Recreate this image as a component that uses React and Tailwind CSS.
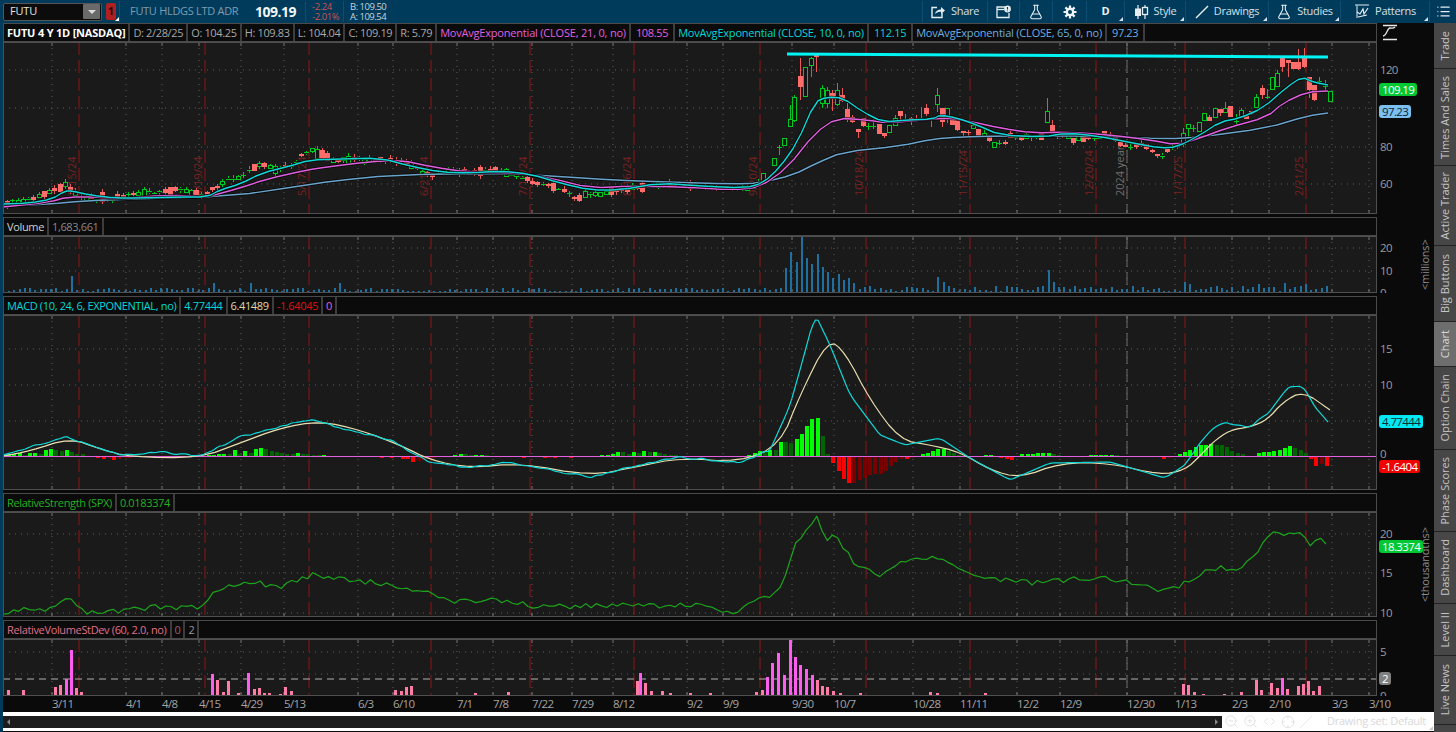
import React from "react";
import { FlaskConical, List, ZoomIn, ZoomOut, Crosshair, Slash, ChevronsLeftRight } from "lucide-react";

const rnd = (seed) => () => {
  seed |= 0; seed = (seed + 0x6d2b79f5) | 0;
  let t = Math.imul(seed ^ (seed >>> 15), 1 | seed);
  t = (t + Math.imul(t ^ (t >>> 7), 61 | t)) ^ t;
  return ((t ^ (t >>> 14)) >>> 0) / 4294967296;
};
const interp = (pts, x) => {
  if (x <= pts[0][0]) return pts[0][1];
  for (let i = 1; i < pts.length; i++) {
    if (x <= pts[i][0]) {
      const [a, b] = pts[i - 1], [c, d] = pts[i];
      return b + ((x - a) / (c - a)) * (d - b);
    }
  }
  return pts[pts.length - 1][1];
};
const toPts = (p) => p.map((q) => q.join(",")).join(" ");
const chaikin = (p, n = 2) => {
  let cur = p;
  for (let k = 0; k < n; k++) {
    const out = [cur[0]];
    for (let i = 0; i < cur.length - 1; i++) {
      const [a, b] = cur[i], [c, d] = cur[i + 1];
      out.push([a * 0.75 + c * 0.25, b * 0.75 + d * 0.25], [a * 0.25 + c * 0.75, b * 0.25 + d * 0.75]);
    }
    out.push(cur[cur.length - 1]);
    cur = out;
  }
  return cur;
};
const wobble = (p, amp, seed, xMax = 1400) => {
  const r = rnd(seed), out = [];
  for (let x = p[0][0]; x <= p[p.length - 1][0]; x += 5.25) {
    out.push([x, interp(p, x) + (x < xMax ? (r() - 0.5) * amp : 0)]);
  }
  out.push(p[p.length - 1]);
  return out;
};

const GRID_X = [52,126,162,199,241,284,358,393,457,493,532,572,613,687,723,792,834,913,960,1017,1060,1127,1175,1232,1269,1332,1369];
const DATE_LABELS = [["3/11",52],["4/1",126],["4/8",162],["4/15",199],["4/29",241],["5/13",284],["6/3",358],["6/10",393],["7/1",457],["7/8",493],["7/22",532],["7/29",572],["8/12",613],["9/2",687],["9/9",723],["9/30",792],["10/7",834],["10/28",913],["11/11",960],["12/2",1017],["12/9",1060],["12/30",1127],["1/13",1175],["2/3",1232],["2/10",1269],["3/3",1332],["3/10",1369]];
const RED = [[79,"3/15/24"],[205,"4/19/24"],[309,"5/17/24"],[431,"6/21/24"],[530,"7/19/24"],[634,"8/16/24"],[760,"9/20/24"],[866,"10/18/24"],[970,"11/15/24"],[1096,"12/20/24"],[1185,"1/17/25"],[1306,"2/21/25"]];

const CENTER = [[8,203],[30,198],[50,193],[65,183],[72,190],[80,197],[110,199],[130,194],[165,192],[180,190],[205,196],[213,188],[225,180],[240,176],[250,170],[262,163],[275,168],[290,166],[300,157],[310,150],[320,155],[335,160],[350,158],[380,160],[400,161],[410,165],[420,171],[430,175],[445,172],[470,172],[495,170],[515,172],[520,178],[540,184],[565,190],[575,198],[590,194],[610,192],[650,185],[680,185],[700,186],[720,186],[740,190],[750,188],[757,182],[765,176]];

const Z7 = [[222,355,375,355,375,"g"],[238,320,324,315,345,"g"],[253,295,315,295,315,"g"],[269,238,260,195,262,"g"],[283,172,240,165,245,"g"],[300,108,142,55,180,"r"],[316,82,170,82,170,"g"],[332,55,77,50,112,"g"],[347,45,48,45,95,"r"],[365,145,190,135,205,"g"],[380,150,188,140,205,"g"],[396,158,178,150,212,"r"],[410,150,193,130,198,"g"],[427,165,183,145,185,"r"],[441,207,240,190,245,"r"],[457,230,245,225,248,"r"],[473,267,275,267,295,"r"],[489,233,257,233,260,"r"],[505,258,262,250,270,"g"],[520,258,262,238,268,"g"],[537,252,282,252,282,"r"],[552,278,287,278,293,"r"],[568,256,278,256,278,"g"],[584,235,255,225,258,"g"],[600,213,228,213,240,"r"],[615,238,242,222,245,"g"],[632,235,241,230,255,"r"],[647,238,241,225,245,"r"],[662,236,240,200,240,"g"],[678,205,222,193,228,"r"],[694,237,240,232,262,"g"],[710,165,192,145,215,"g"],[725,205,245,205,262,"r"],[741,205,228,205,250,"g"],[756,235,255,228,255,"r"],[772,240,270,235,272,"r"],[788,273,280,273,290,"r"],[804,275,278,270,290,"r"],[819,255,265,250,268,"g"],[835,268,290,268,290,"r"],[851,278,286,268,288,"g"],[867,288,303,288,305,"r"],[882,305,320,305,322,"g"],[897,308,312,300,316,"g"]].map((c) => [700 + c[0] / 3, ...c.slice(1, 5).map((y) => 40 + y / 3), c[5]]);
const Z11 = [[14,305,312,300,316,"r"],[30,278,295,270,295,"r"],[46,290,294,285,300,"g"],[62,285,300,285,302,"r"],[77,282,295,278,295,"g"],[93,288,295,288,302,"r"],[108,290,294,285,298,"g"],[124,278,300,278,300,"r"],[140,213,247,173,248,"g"],[155,255,275,240,275,"r"],[171,275,288,275,298,"r"],[186,283,288,280,295,"r"],[203,283,295,283,295,"g"],[219,295,308,295,315,"r"],[235,283,302,283,302,"g"],[250,280,305,280,305,"r"],[265,288,298,288,300,"r"],[281,294,298,288,303,"g"],[297,285,295,285,295,"g"],[313,272,283,272,285,"r"],[329,283,287,275,295,"r"],[344,290,303,290,305,"r"],[360,307,318,307,320,"r"],[375,314,320,310,322,"r"],[391,320,324,308,330,"g"],[407,313,320,313,328,"r"],[423,308,318,295,320,"r"],[439,311,327,311,330,"r"],[455,330,336,328,340,"r"],[470,342,348,342,355,"r"],[486,346,350,340,357,"g"],[502,327,336,327,338,"r"],[517,318,322,312,330,"g"],[532,318,322,312,328,"g"],[548,278,310,265,320,"g"],[564,253,265,253,290,"g"],[580,263,267,255,275,"g"],[596,247,275,247,275,"g"],[612,220,240,220,240,"g"],[627,232,242,225,242,"r"],[644,205,233,205,235,"g"],[660,207,220,207,228,"r"],[675,203,215,185,215,"g"],[690,198,230,198,232,"r"],[707,243,247,222,255,"g"],[723,210,230,203,230,"g"],[738,228,238,225,238,"r"],[754,212,222,212,224,"r"],[769,172,203,162,203,"g"],[785,143,165,135,178,"r"],[801,170,174,148,178,"g"],[816,112,148,112,148,"g"],[832,100,140,90,140,"g"]].map((c) => [1000 + c[0] / 3, ...c.slice(1, 5).map((y) => 40 + y / 3), c[5]]);
const Z3 = [[247,85,110,85,125,"r"],[263,90,100,90,140,"r"],[279,95,117,95,118,"r"],[295,97,118,58,120,"r"],[312,85,112,55,113,"r"],[327,140,180,140,205,"r"],[343,165,210,165,212,"r"],[358,153,157,140,165,"g"],[374,168,172,150,185,"g"],[390,182,212,182,212,"g"]].map((c) => [1200 + c[0] / 3, ...c.slice(1, 5).map((y) => 30 + y / 3), c[5]]);

const bgCandles = (() => {
  const r = rnd(77), out = [];
  for (let x = 763; x > 6; x -= 5.25) {
    const c = interp(CENTER, x) + (r() - 0.5) * 3;
    const big = r() < 0.15;
    const h = big ? 5 + r() * 5 : 1.5 + r() * 2.5;
    const g = r() < 0.5;
    const w1 = c - h / 2 - r() * 3;
    const w2 = c + h / 2 + r() * 3;
    out.push([x, c - h / 2, c + h / 2, w1, w2, g ? "g" : "r"]);
  }
  out.push([773.5, 158, 165, 158, 165, "g"]);
  return out;
})();
const CANDLES = [...bgCandles, ...Z7, ...Z11, ...Z3];

const CYAN = chaikin([[3,204],[30,203],[52,199],[65,191],[72,191],[90,195],[115,198],[140,198],[180,197],[207,197],[220,190],[240,184],[262,173],[290,166],[310,160],[340,159],[380,158],[410,166],[440,172],[470,173],[500,171],[530,174],[560,183],[590,190],[620,190],[660,183],[700,186],[745,188],[763,183],[780,167],[797,143],[815,102],[827,97],[843,98],[863,112],[883,122],[907,120],[933,119],[940,115],[957,118],[977,125],[1000,135],[1043,137],[1067,133],[1097,136],[1133,143],[1160,148],[1177,147],[1200,135],[1220,122],[1240,118],[1263,108],[1287,87],[1302,77],[1313,82],[1328,85]], 1);
const PINK = chaikin([[3,207],[50,202],[67,197],[100,197],[117,199],[167,195],[207,197],[240,188],[267,179],[307,170],[327,167],[367,162],[400,160],[433,167],[467,172],[517,173],[550,178],[590,188],[633,186],[683,187],[733,190],[760,187],[787,168],[815,133],[837,118],[867,120],[887,123],[933,119],[950,118],[973,122],[1000,128],[1033,133],[1067,132],[1110,135],[1150,140],[1177,145],[1200,138],[1227,128],[1267,117],[1283,103],[1307,92],[1328,91]], 1);
const BLUE = chaikin([[3,206],[50,204],[83,201],[133,199],[233,196],[300,186],[333,181],[393,175],[500,173],[567,177],[613,180],[667,182],[733,184],[760,183],[793,175],[817,163],[843,152],[900,146],[933,139],[960,137],[1000,136],[1100,136],[1167,139],[1200,137],[1267,128],[1307,116],[1328,113]], 1);
const M_CYAN_RAW = [[3,455],[30,447],[50,442],[65,436],[85,444],[120,455],[160,452],[200,456],[225,444],[240,437],[280,427],[310,419],[340,428],[390,440],[430,462],[470,468],[510,462],[550,470],[590,477],[640,465],[680,457],[740,463],[770,450],[790,405],[800,370],[813,322],[816,316],[830,345],[850,395],[880,435],[905,445],[940,438],[970,458],[1010,480],[1050,463],[1110,462],[1165,478],[1185,465],[1200,443],[1213,428],[1225,422],[1233,425],[1240,425],[1250,428],[1260,418],[1267,415],[1288,387],[1303,386],[1315,407],[1328,422]];
const M_YEL_RAW = [[3,456],[30,451],[70,438],[100,449],[130,457],[200,458],[240,443],[280,428],[320,421],[360,430],[400,445],[430,460],[470,468],[520,463],[590,476],[640,466],[680,458],[740,462],[780,445],[800,395],[828,339],[845,352],[870,400],[900,440],[930,445],[960,452],[990,470],[1020,478],[1060,463],[1110,463],[1160,475],[1185,470],[1200,456],[1213,442],[1230,430],[1250,427],[1267,420],[1283,402],[1303,391],[1330,410]];
const M_CYAN = chaikin(wobble(M_CYAN_RAW, 2.2, 11, 790), 1);
const M_YEL = chaikin(M_YEL_RAW, 2);
const H_LEFT = [[3,1],[30,3],[60,6],[75,3],[90,-1],[115,-3],[130,-1],[200,0],[225,3],[255,7],[275,3],[300,2],[320,0.5],[350,-0.5],[400,-2],[420,-5],[440,-1],[460,2],[520,-1],[560,-2],[590,-1],[620,3],[650,4],[680,0],[700,-0.5],[740,-1],[760,4],[770,8]];

const RS = (() => {
  const base = [[3,613],[30,609],[50,609],[65,597],[85,612],[115,612],[150,607],[200,607],[215,590],[250,582],[280,587],[310,575],[345,580],[380,583],[420,590],[450,602],[500,600],[540,607],[590,606],[640,605],[700,606],[735,612],[750,605],[780,590],[795,545],[805,530],[816,516],[825,540],[835,535],[855,565],[880,575],[900,562],[940,558],[970,575],[1000,580],[1040,583],[1060,580],[1110,578],[1150,588],[1170,590],[1190,580],[1215,568],[1240,570],[1258,550],[1270,535],[1290,533],[1300,530],[1310,545],[1322,540],[1330,548]];
  const r = rnd(5), out = [];
  for (let x = 3; x <= 1330; x += 5.25) out.push([x, interp(base, x) + (r() - 0.5) * 5.5]);
  return out;
})();

const VOL = (() => {
  const r = rnd(19), out = [];
  const spikes = { 72: 16, 212: 9, 248: 9, 338: 9, 787: 24, 792: 40, 797: 30, 801: 56, 806: 34, 811: 28, 816: 38, 822: 25, 827: 20, 832: 14, 837: 18, 842: 12, 848: 14, 853: 9, 937: 15, 942: 10, 1047: 22, 1052: 10, 1183: 10, 1188: 8, 1256: 8, 1282: 9, 1304: 8 };
  for (let x = 8; x <= 1330; x += 5.25) {
    let h = 1 + r() * (x > 770 ? 5 : 3.5);
    if (x > 410 && x < 620 && r() < 0.5) h = 1;
    for (const k in spikes) if (Math.abs(+k - x) < 2.7) h = spikes[k];
    out.push([x, h]);
  }
  return out;
})();

const RV = [[8,5],[23,5],[55,8],[60,10],[66,16],[71,45],[76,7],[81,3],[212,21],[217,15],[223,3],[228,14],[238,2],[248,22],[254,6],[259,7],[264,2],[269,2],[280,1],[285,8],[291,4],[395,5],[401,4],[406,8],[411,9],[475,2],[508,3],[637,14],[640,22],[645,12],[651,4],[662,4],[670,2],[690,2],[710,2],[756,3],[762,5],[767,18],[772,32],[778,42],[784,20],[790,55],[795,38],[800,30],[806,26],[812,20],[817,15],[822,9],[827,8],[833,4],[840,2],[860,2],[930,3],[937,2],[985,2],[1183,11],[1188,10],[1194,3],[1203,1],[1224,1],[1241,3],[1256,15],[1261,5],[1271,12],[1277,7],[1282,17],[1287,6],[1298,9],[1303,11],[1308,14],[1313,4],[1319,9]];

const macdHist = (() => {
  const out = [];
  const r = rnd(31);
  let prev = 0;
  for (let x = 8; x <= 1330; x += 5.25) {
    let v = x < 770 ? interp(H_LEFT, x) * (0.5 + r()) : (interp(M_YEL_RAW, x) - interp(M_CYAN_RAW, x)) * 0.85;
    if (x > 1308) v = -[3, 10, 8, 10, 11][Math.min(4, Math.round((x - 1309) / 5.25))];
    const up = v >= prev;
    const c = v >= 0 ? (up ? "#00ff00" : "#006400") : (up ? "#7a0000" : "#ff0000");
    out.push([x, v, c]);
    prev = v;
  }
  return out;
})();

function Grid({ top, h, ys = [] }) {
  return (
    <g>
      {GRID_X.map((x) => (
        <g key={x}>
          <line x1={x} x2={x} y1={top} y2={top + h} stroke="#5e5e5e" strokeDasharray="1 5" />
          <line x1={x} x2={x} y1={top} y2={top + 4} stroke="#777" />
          <line x1={x} x2={x} y1={top + h - 4} y2={top + h} stroke="#777" />
        </g>
      ))}
      {ys.map((y) => (
        <line key={y} x1={3} x2={1374} y1={y} y2={y} stroke="#5e5e5e" strokeDasharray="1 5" />
      ))}
    </g>
  );
}

function RedLines({ top, h, labels }) {
  return (
    <g>
      {RED.map(([x, t]) => (
        <g key={t}>
          <line x1={x} x2={x} y1={top} y2={top + h} stroke="#8f1414" strokeDasharray="13 5" />
          {labels && (
            <text transform={`translate(${x - 3},196) rotate(-90)`} fill="#7a2222" fontSize="11" fontFamily="'Open Sans',sans-serif">{t}</text>
          )}
        </g>
      ))}
      <line x1={1127} x2={1127} y1={top} y2={top + h} stroke="#6a6a6a" strokeDasharray="13 5" />
      {labels && <text transform="translate(1124,196) rotate(-90)" fill="#6f6f6f" fontSize="11" fontFamily="'Open Sans',sans-serif">2024 year</text>}
    </g>
  );
}

function Plot({ top, h, children }) {
  return (
    <svg width={1374} height={h} viewBox={`3 ${top} 1374 ${h}`} className="block shrink-0 bg-[#1a1a1a]">
      {children}
      <rect x="3.5" y={top + 0.5} width="1373" height={h - 1} fill="none" stroke="#4f4f4f" />
    </svg>
  );
}

function Candle({ c }) {
  const [x0, t, b, w1, w2, k] = c;
  const x = Math.round(x0) + 0.5;
  const col = k === "g" ? "#00c81e" : "#ff6c6c";
  const thin = b - t < 2.5;
  return (
    <g shapeRendering="crispEdges">
      <line x1={x} x2={x} y1={w1} y2={t} stroke={k === "g" ? "#00c81e" : "#e85a5a"} />
      <line x1={x} x2={x} y1={b} y2={w2} stroke={k === "g" ? "#00c81e" : "#e85a5a"} />
      {k === "g" ? (
        thin ? <line x1={x - 2.5} x2={x + 2.5} y1={(t + b) / 2} y2={(t + b) / 2} stroke={col} /> : <rect x={x - 2} y={Math.round(t) + 0.5} width={4} height={Math.max(1, Math.round(b - t))} fill="#141414" stroke={col} />
      ) : (
        <rect x={x - 2.5} y={t} width={5} height={Math.max(1.5, b - t)} fill={col} />
      )}
    </g>
  );
}

function Halo({ pts, color }) {
  return (
    <g fill="none" strokeLinejoin="round">
      <polyline points={toPts(pts)} stroke="#000" strokeWidth="3" opacity="0.75" />
      <polyline points={toPts(pts)} stroke={color} strokeWidth="1.4" />
    </g>
  );
}

function Legend({ items }) {
  return (
    <div className="h-[19px] shrink-0 flex items-stretch border border-[#4a4a4a] bg-[#0b0b0b] text-[11px] tracking-[-0.35px] leading-[17px] whitespace-nowrap">
      {items.map(([t, cls], i) => (
        <span key={i} className={`border-r-2 border-[#3d3d3d] ${cls.includes("px-") ? "" : "px-[3px]"} ${cls}`}>{t}</span>
      ))}
    </div>
  );
}

function AxisLabel({ y, children }) {
  return <span className="absolute left-[3px] text-[11.5px] tracking-[-0.7px] leading-none text-[#9c9c9c]" style={{ top: y - 6 }}>{children}</span>;
}
function Badge({ y, cls, children }) {
  return <span className={`absolute left-[2px] h-[13px] px-[3px] rounded-[3px] text-[11.5px] tracking-[-0.6px] leading-[13px] ${cls}`} style={{ top: y - 6 }}>{children}</span>;
}
function Axis({ h, top, children, unit }) {
  return (
    <div className="relative w-[57px] shrink-0 overflow-hidden" style={{ height: h }}>
      {unit && <span className="absolute right-[1px] top-0 bottom-0 flex items-center justify-center text-[11px] tracking-[-0.2px] text-[#8c8c8c] [writing-mode:vertical-rl] rotate-180">{unit}</span>}
      <div className="absolute inset-0" style={{ transform: `translateY(${-top}px)` }}>{children}</div>
    </div>
  );
}

function Caret() {
  return <span className="absolute right-[1px] bottom-[1px] w-0 h-0 border-l-[4px] border-l-transparent border-b-[4px] border-b-[#d8e4ec]" />;
}
function Btn({ w, children, caret = true }) {
  return (
    <div className="relative h-[21px] flex items-center justify-center gap-[5px] border-l border-[#0d4c73] text-[11px] tracking-[-0.3px] text-[#d6e0e6]" style={{ width: w }}>
      {children}
      {caret && <Caret />}
    </div>
  );
}

const Ic = {
  share: (
    <svg width="15" height="14" viewBox="0 0 15 14" fill="none" stroke="#e6eef2" strokeWidth="1.4"><path d="M6 2.5H1v10h10V8" /><path d="M4 9c.6-3 2.8-4.6 6-4.6V2l4 3.6L10 9V6.8C7.8 6.8 5.6 7.4 4 9z" fill="#e6eef2" stroke="none" /></svg>
  ),
  cal: (
    <svg width="15" height="14" viewBox="0 0 15 14" fill="none" stroke="#e6eef2" strokeWidth="1.3"><path d="M9 2H1v10.5h12V8" /><path d="M1 4.5h7" /><circle cx="11.5" cy="4" r="3.4" fill="#e6eef2" stroke="none" /><path d="M11.5 2v2.5M11.5 5.4v.9" stroke="#003b5c" strokeWidth="1.1" /></svg>
  ),
  gear: (
    <svg width="14" height="14" viewBox="0 0 14 14"><g stroke="#eef3f6" strokeWidth="2.2"><path d="M7 0.5v13M.5 7h13M2.4 2.4l9.2 9.2M11.6 2.4l-9.2 9.2" /></g><circle cx="7" cy="7" r="4.4" fill="#eef3f6" /><circle cx="7" cy="7" r="2" fill="#003b5c" /></svg>
  ),
  style: (
    <svg width="15" height="16" viewBox="0 0 15 16" fill="none" stroke="#e6eef2"><path d="M4 1v14M11 1v14" strokeWidth="1.2" /><rect x="1.5" y="5" width="5" height="6.5" fill="#e6eef2" /><rect x="8.5" y="3.5" width="5" height="7" fill="#003b5c" strokeWidth="1.3" /></svg>
  ),
  draw: (
    <svg width="14" height="14" viewBox="0 0 14 14" stroke="#e6eef2" strokeWidth="1.5"><path d="M1 13L13 1" /></svg>
  ),
  pat: (
    <svg width="16" height="15" viewBox="0 0 16 15" fill="none" stroke="#e6eef2" strokeWidth="1.2"><path d="M1 1h14M3 1.5L3 14" strokeWidth="1" /><path d="M3 8l3 2 3-5 1 5 4-6M4 13l9-2" /></svg>
  ),
};

const TABS = [["Trade",46],["Times And Sales",97],["Active Trader",80],["Big Buttons",76],["Chart",45],["Option Chain",83],["Phase Scores",82],["Dashboard",72],["Level II",52],["Live News",69]];

function TopBar() {
  return (
    <div className="h-[23px] shrink-0 flex items-center bg-[#003b5c] text-[#d6e0e6]">
      <div className="relative ml-[3px] w-[99px] h-[18px] flex items-center justify-between bg-[#0c0c0c] border border-[#555] rounded-[2px] pl-[6px]">
        <span className="text-[11px] tracking-[-0.2px] text-[#e4e4e4]">FUTU</span>
        <span className="w-[17px] h-[15px] mr-[1px] flex items-center justify-center bg-[#6a6a6a] rounded-[1px]"><span className="w-0 h-0 border-l-[4px] border-r-[4px] border-t-[4px] border-l-transparent border-r-transparent border-t-[#ddd]" /></span>
      </div>
      <div className="relative ml-[4px] w-[10px] h-[17px] flex items-center justify-center bg-[#b02020] rounded-[2px] text-[11px] font-bold text-[#2a0808]">1<span className="absolute -right-[3px] -bottom-[1px] w-0 h-0 border-l-[4px] border-l-transparent border-b-[4px] border-b-white" /></div>
      <div className="ml-[3px] h-[21px] flex items-center border-l border-[#0d4c73] pl-[10px] w-[133px] text-[11px] tracking-[-0.3px] text-[#7f9db0] whitespace-nowrap">FUTU HLDGS LTD ADR</div>
      <div className="h-[21px] flex items-center pl-[3px] w-[53px] text-[14px] tracking-[-0.5px] font-bold text-[#f2f5f7]">109.19</div>
      <div className="h-[21px] flex flex-col justify-center border-l border-[#0d4c73] pl-[6px] w-[38px] text-[9.5px] tracking-[-0.4px] leading-[10px] text-[#d05050]"><span>-2.24</span><span>-2.01%</span></div>
      <div className="h-[21px] flex flex-col justify-center border-l border-[#0d4c73] pl-[6px] w-[60px] text-[9.5px] tracking-[-0.5px] leading-[10px] text-[#c6d2da]"><span>B: 109.50</span><span>A: 109.54</span></div>
      <div className="flex-1" />
      <Btn w={65} caret={false}>{Ic.share}<span>Share</span></Btn>
      <Btn w={32} caret={false}>{Ic.cal}</Btn>
      <Btn w={33} caret={false}><FlaskConical size={16} color="#e6eef2" strokeWidth={1.6} /></Btn>
      <Btn w={34} caret={false}>{Ic.gear}</Btn>
      <Btn w={38}><span className="font-bold text-[#eef3f6]">D</span></Btn>
      <Btn w={61}>{Ic.style}<span>Style</span></Btn>
      <Btn w={83}>{Ic.draw}<span>Drawings</span></Btn>
      <Btn w={72}><FlaskConical size={16} color="#e6eef2" strokeWidth={1.6} /><span>Studies</span></Btn>
      <Btn w={89}>{Ic.pat}<span>Patterns</span></Btn>
      <Btn w={27} caret={false}><List size={15} color="#e6eef2" /></Btn>
    </div>
  );
}

function PricePane() {
  return (
    <div className="flex">
      <Plot top={42} h={172}>
        <Grid top={42} h={172} ys={[70, 108, 147, 184]} />
        <RedLines top={42} h={172} labels />
        {CANDLES.map((c, i) => <Candle key={i} c={c} />)}
        <Halo pts={BLUE} color="#6aa4cc" />
        <Halo pts={PINK} color="#df5fdf" />
        <Halo pts={CYAN} color="#10d8d8" />
        <line x1={787} x2={1328} y1={54} y2={57} stroke="#00f4f4" strokeWidth="3" />
      </Plot>
      <Axis h={172} top={42}>
        <AxisLabel y={70}>120</AxisLabel>
        <AxisLabel y={147}>80</AxisLabel>
        <AxisLabel y={184}>60</AxisLabel>
        <Badge y={89} cls="bg-[#00c832] text-white">109.19</Badge>
        <Badge y={111} cls="bg-[#7cc0f0] text-[#10233a]">97.23</Badge>
      </Axis>
    </div>
  );
}

export default function App() {
  return (
    <div className="w-[1456px] h-[732px] flex flex-col overflow-hidden bg-[#003b5c] font-['Open_Sans',sans-serif]">
      <TopBar />
      <div className="flex-1 flex min-h-0">
        <div className="w-[3px] shrink-0" />
        <div className="w-[1431px] shrink-0 flex flex-col bg-[#0a0a0a]">
          <div className="flex shrink-0">
            <div className="w-[1374px]">
              <Legend items={[
                ["FUTU 4 Y 1D [NASDAQ]", "font-bold tracking-[-0.2px] text-white"],
                ["D: 2/28/25", "text-[#a8a8a8]"], ["O: 104.25", "text-[#a8a8a8]"], ["H: 109.83", "text-[#a8a8a8]"], ["L: 104.04", "text-[#a8a8a8]"], ["C: 109.19", "text-[#a8a8a8]"], ["R: 5.79", "text-[#a8a8a8]"],
                ["MovAvgExponential (CLOSE, 21, 0, no)", "tracking-[-0.2px] text-[#e060e0]"], ["108.55", "px-[5px] text-[#e060e0]"],
                ["MovAvgExponential (CLOSE, 10, 0, no)", "tracking-[-0.2px] text-[#00d8d8]"], ["112.15", "px-[5px] text-[#00d8d8]"],
                ["MovAvgExponential (CLOSE, 65, 0, no)", "tracking-[-0.2px] text-[#6aaee0]"], ["97.23", "px-[5px] text-[#6aaee0]"],
              ]} />
            </div>
            <div className="w-[57px] h-[19px] flex items-center pl-[5px]">
              <svg width="16" height="17" viewBox="0 0 16 17" fill="none" stroke="#e8e8e8" strokeWidth="1.3"><path d="M1 1.5h14M1 15.5h14" /><path d="M1 12c4 0 4-8 7-8 2 0 3 1 5-1" /></svg>
            </div>
          </div>
          <PricePane />

          <div className="h-[3px] shrink-0" />
          <div className="w-[1374px]"><Legend items={[["Volume", "text-[#d0d0d0]"], ["1,683,661", "text-[#8a8a8a]"]]} /></div>
          <div className="flex">
            <Plot top={236} h={57}>
              <Grid top={236} h={57} ys={[248, 271]} />
              <RedLines top={236} h={57} />
              {VOL.map(([x, v], i) => <rect key={i} x={Math.round(x)} y={292 - v} width="2" height={v} fill="#1f6f9f" shapeRendering="crispEdges" />)}
            </Plot>
            <Axis h={57} top={236} unit="<millions>">
              <AxisLabel y={248}>20</AxisLabel>
              <AxisLabel y={271}>10</AxisLabel>
              <AxisLabel y={293}>0</AxisLabel>
            </Axis>
          </div>

          <div className="h-[3px] shrink-0" />
          <div className="w-[1374px]"><Legend items={[["MACD (10, 24, 6, EXPONENTIAL, no)", "text-[#00d8d8]"], ["4.77444", "text-[#00d8d8]"], ["6.41489", "text-[#e0d8a8]"], ["-1.64045", "text-[#e01010]"], ["0", "text-[#e060e0]"]]} /></div>
          <div className="flex">
            <Plot top={315} h={175}>
              <Grid top={315} h={175} ys={[349, 385, 421]} />
              <RedLines top={315} h={175} />
              {macdHist.map(([x, v, c], i) => (
                <rect key={i} x={Math.round(x) - 1} y={v >= 0 ? 456 - v : 456} width="3.5" height={Math.abs(v)} fill={c} shapeRendering="crispEdges" />
              ))}
              <line x1={3} x2={1377} y1={456.5} y2={456.5} stroke="#e060e0" />
              <polyline points={toPts(M_YEL)} fill="none" stroke="#e8dfb0" strokeWidth="1.2" strokeLinejoin="round" />
              <polyline points={toPts(M_CYAN)} fill="none" stroke="#10d8d8" strokeWidth="1.2" strokeLinejoin="round" />
            </Plot>
            <Axis h={175} top={315}>
              <AxisLabel y={349}>15</AxisLabel>
              <AxisLabel y={385}>10</AxisLabel>
              <AxisLabel y={454}>0</AxisLabel>
              <Badge y={421} cls="bg-[#00e8f4] text-[#0b2a30]">4.77444</Badge>
              <Badge y={466} cls="bg-[#f00000] text-white">-1.6404</Badge>
            </Axis>
          </div>

          <div className="h-[3px] shrink-0" />
          <div className="w-[1374px]"><Legend items={[["RelativeStrength (SPX)", "text-[#22b022]"], ["0.0183374", "text-[#22b022]"]]} /></div>
          <div className="flex">
            <Plot top={512} h={105}>
              <Grid top={512} h={105} ys={[534, 573, 613]} />
              <RedLines top={512} h={105} />
              <polyline points={toPts(RS)} fill="none" stroke="#1ca41c" strokeWidth="1.2" strokeLinejoin="round" />
            </Plot>
            <Axis h={105} top={512} unit="<thousandths>">
              <AxisLabel y={534}>20</AxisLabel>
              <AxisLabel y={573}>15</AxisLabel>
              <AxisLabel y={613}>10</AxisLabel>
              <Badge y={546} cls="bg-[#00c832] text-white">18.3374</Badge>
            </Axis>
          </div>

          <div className="h-[3px] shrink-0" />
          <div className="w-[1374px]"><Legend items={[["RelativeVolumeStDev (60, 2.0, no)", "text-[#e0708a]"], ["0", "text-[#a06070]"], ["2", "text-[#9a9a9a]"]]} /></div>
          <div className="flex">
            <Plot top={639} h={57}>
              <Grid top={639} h={57} ys={[652, 674]} />
              <RedLines top={639} h={57} />
              <line x1={3} x2={1377} y1={679} y2={679} stroke="#b0b0b0" strokeDasharray="7 5" />
              {RV.map(([x, v], i) => <rect key={i} x={x - 1.5} y={695 - v} width="3.5" height={v} fill={v >= 16 ? "#ff5cf0" : "#ff7ca6"} shapeRendering="crispEdges" />)}
            </Plot>
            <Axis h={57} top={639}>
              <AxisLabel y={652}>5</AxisLabel>
              <AxisLabel y={696}>0</AxisLabel>
              <Badge y={678} cls="bg-[#808080] text-white">2</Badge>
            </Axis>
          </div>

          <div className="relative h-[16px] shrink-0 text-[11.5px] tracking-[-0.6px] text-[#a4a4a4]">
            {DATE_LABELS.map(([t, x]) => (
              <span key={t} className="absolute top-0 leading-[16px]" style={{ left: x - 3 }}>{t}</span>
            ))}
          </div>

          <div className="relative h-[19px] shrink-0 flex items-center bg-white">
            <div className="w-[1219px] h-[12px] flex items-center justify-between px-[4px] bg-[#1c1c1c]">
              <span className="w-0 h-0 border-y-[3px] border-y-transparent border-r-[3px] border-r-[#888]" />
              <span className="w-0 h-0 border-y-[3px] border-y-transparent border-l-[3px] border-l-[#888]" />
            </div>
            <div className="w-[105px] shrink-0 flex items-center gap-[4px] pl-[2px] text-[#d8d8d8]">
              <ZoomOut size={15} strokeWidth={1.2} />
              <ZoomIn size={15} strokeWidth={1.2} />
              <ChevronsLeftRight size={15} strokeWidth={1.2} />
              <Crosshair size={14} strokeWidth={1.2} />
              <Slash size={14} strokeWidth={1.2} />
            </div>
            <span className="text-[11px] tracking-[-0.25px] text-[#d8d8d8] whitespace-nowrap">Drawing set: Default</span>
            <span className="absolute right-[1px] bottom-[1px] w-0 h-0 border-l-[4px] border-l-transparent border-b-[4px] border-b-[#c8c8c8]" />
          </div>
        </div>

        <div className="flex-1 flex flex-col bg-[#0a0a0a]">
          {TABS.map(([t, h]) => (
            <div key={t} className={`shrink-0 flex items-center justify-center border-b border-[#222] ${t === "Chart" ? "bg-[#6e6e6e] text-[#d8d8d8]" : "bg-[#474747] text-[#c4c4c4]"}`} style={{ height: h }}>
              <span className="text-[11px] whitespace-nowrap [writing-mode:vertical-rl] rotate-180">{t}</span>
            </div>
          ))}
          <div className="flex-1 bg-[#474747]" />
        </div>
      </div>
    </div>
  );
}
